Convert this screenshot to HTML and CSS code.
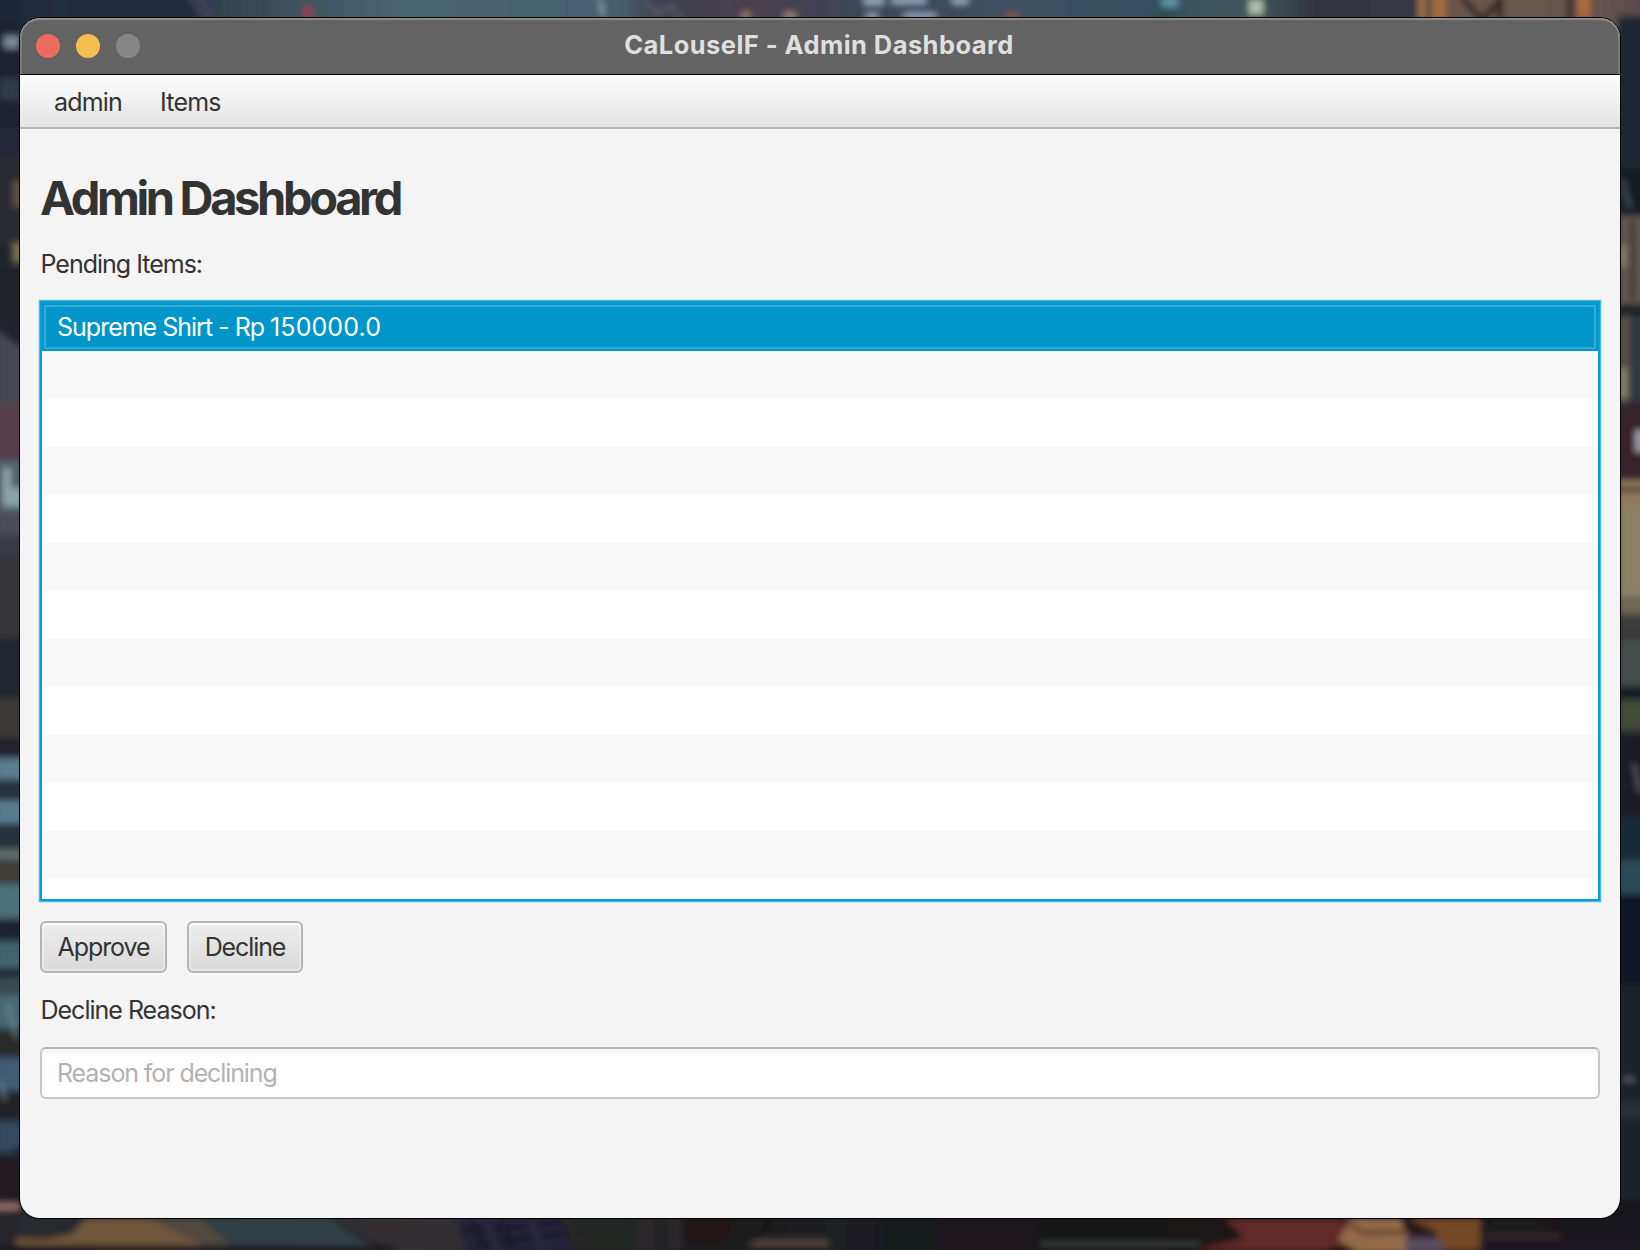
FILE: index.html
```html
<!DOCTYPE html>
<html lang="en">
<head>
<meta charset="utf-8">
<title>CaLouselF - Admin Dashboard</title>
<link rel="stylesheet" href="styles.css">
</head>
<body>
<svg class="wallpaper" width="1640" height="1250" viewBox="0 0 1640 1250" aria-hidden="true">
  <defs>
    <filter id="soft" x="-2%" y="-2%" width="104%" height="104%"><feGaussianBlur stdDeviation="3"/></filter>
    <linearGradient id="sky" x1="0" x2="1" y1="0" y2="0">
      <stop offset="0" stop-color="#1d2532"/><stop offset=".04" stop-color="#222d42"/>
      <stop offset=".12" stop-color="#22293c"/><stop offset=".14" stop-color="#34444f"/>
      <stop offset=".25" stop-color="#4a6674"/><stop offset=".38" stop-color="#456070"/>
      <stop offset=".4" stop-color="#3f424f"/><stop offset=".46" stop-color="#483f4c"/>
      <stop offset=".52" stop-color="#3d4556"/><stop offset=".62" stop-color="#3c5163"/>
      <stop offset=".7" stop-color="#355060"/><stop offset=".76" stop-color="#42575c"/>
      <stop offset=".8" stop-color="#32353e"/><stop offset=".86" stop-color="#353844"/>
      <stop offset=".88" stop-color="#6b5448"/><stop offset=".97" stop-color="#64544f"/>
      <stop offset="1" stop-color="#57494a"/>
    </linearGradient>
    <linearGradient id="street" x1="0" x2="1" y1="0" y2="0">
      <stop offset="0" stop-color="#25272b"/><stop offset=".24" stop-color="#2d3b40"/>
      <stop offset=".28" stop-color="#2d2b2c"/><stop offset=".45" stop-color="#1c1c1d"/>
      <stop offset=".51" stop-color="#1b2022"/><stop offset=".62" stop-color="#141618"/>
      <stop offset=".75" stop-color="#1c1718"/><stop offset=".92" stop-color="#1b1a1c"/>
      <stop offset="1" stop-color="#16181f"/>
    </linearGradient>
  </defs>
  <rect width="1640" height="1250" fill="#20242c"/>
  <g filter="url(#soft)">
    <rect x="-10" y="-10" width="1660" height="40" fill="url(#sky)"/>
    <path d="M185-5h20l16 30h-14z" fill="#3a4158"/>
    <path d="M304 6h7v14h-7z" fill="#a03048"/>
    <path d="M600 0l3 16" stroke="#b4c8ce" stroke-width="2"/>
    <path d="M645 0l12 14 14-8 10 14" stroke="#5d6273" stroke-width="3" fill="none"/>
    <path d="M742 12h8v8h-8zM784 12h12v8h-12z" fill="#9a7e70"/>
    <path d="M864-4h20v9h-20zM892-4h34v8h-34zM952-4h16v8h-16zM866 13h12v6h-12zM904 13h32v6h-32z" fill="#8fa3bd"/>
    <path d="M1006 13h12v8h-12z" fill="#8a4b44"/>
    <path d="M1162-3h16v10h-16z" fill="#5f93a8"/>
    <path d="M1150 10h26v12h-26z" fill="#2f4d55"/>
    <path d="M1249 0h14v14h-14z" fill="#b0bfa8"/>
    <path d="M1418-5h8v26h-8zM1432-5h14v26h-14z" fill="#a06e42"/>
    <path d="M1462-2l20 22 20-22M1500-5v26M1570-5v26" stroke="#2d2527" stroke-width="6" fill="none"/>
    <path d="M1578-5h12v22h-12z" fill="#b26a34"/>
    <rect x="-5" y="20" width="25" height="112" fill="#1c2431"/>
    <rect x="4" y="36" width="16" height="12" fill="#7b879b"/>
    <rect x="0" y="78" width="20" height="22" fill="#303a4c"/>
    <rect x="-5" y="128" width="30" height="26" fill="#202738"/>
    <rect x="-5" y="154" width="30" height="90" fill="#2b2c33"/>
    <rect x="13" y="181" width="12" height="26" fill="#5d5144"/>
    <rect x="12" y="243" width="12" height="20" fill="#7c6d4c"/>
    <rect x="-5" y="268" width="30" height="55" fill="#24242a"/>
    <path d="M-5 328l18 14 12 6v60h-30z" fill="#464652"/>
    <rect x="-5" y="404" width="30" height="58" fill="#563d49"/>
    <rect x="-5" y="460" width="30" height="52" fill="#53606a"/>
    <path d="M3 468h8v20h12v18h-20z" fill="#8aa5a8"/>
    <rect x="-5" y="512" width="30" height="25" fill="#4c4d59"/>
    <rect x="-5" y="535" width="30" height="22" fill="#393b45"/>
    <rect x="-5" y="556" width="30" height="82" fill="#363637"/>
    <rect x="-5" y="638" width="30" height="60" fill="#21282e"/>
    <rect x="-5" y="698" width="30" height="40" fill="#3b3838"/>
    <rect x="-5" y="738" width="30" height="18" fill="#20242a"/>
    <rect x="-5" y="758" width="30" height="22" fill="#587e90"/>
    <rect x="-5" y="782" width="30" height="16" fill="#26303a"/>
    <rect x="-5" y="800" width="30" height="24" fill="#577b8e"/>
    <rect x="-5" y="826" width="30" height="20" fill="#26303a"/>
    <rect x="-5" y="848" width="30" height="13" fill="#5b6a67"/>
    <rect x="-5" y="863" width="30" height="18" fill="#433c34"/>
    <rect x="-5" y="883" width="30" height="36" fill="#4c7078"/>
    <rect x="-5" y="921" width="30" height="18" fill="#1c222e"/>
    <rect x="-5" y="941" width="30" height="27" fill="#43636f"/>
    <rect x="-5" y="968" width="30" height="10" fill="#1e2833"/>
    <rect x="-5" y="977" width="30" height="18" fill="#3a4a50"/>
    <rect x="-5" y="995" width="30" height="34" fill="#466874"/>
    <rect x="-5" y="1031" width="30" height="24" fill="#2c2a2c"/>
    <rect x="-5" y="1057" width="30" height="34" fill="#405c74"/>
    <rect x="-5" y="1093" width="30" height="28" fill="#232425"/>
    <path d="M-5 1121h30v22l-14 10H-5z" fill="#31485f"/>
    <rect x="-5" y="1158" width="30" height="46" fill="#201e24"/>
    <path d="M8 1004l8 34M0 1082l5 18" stroke="#8ba5aa" stroke-width="1.5"/>
    <rect x="1618" y="16" width="30" height="152" fill="#1c2731"/>
    <rect x="1618" y="168" width="30" height="48" fill="#161d28"/>
    <path d="M1622 180l8 28" stroke="#5c6d78" stroke-width="2"/>
    <rect x="1618" y="216" width="30" height="88" fill="#625750"/>
    <rect x="1630" y="220" width="5" height="80" fill="#3c3637"/>
    <rect x="1618" y="245" width="9" height="22" fill="#837a67"/>
    <rect x="1618" y="304" width="30" height="12" fill="#1b2027"/>
    <rect x="1618" y="316" width="30" height="86" fill="#574f45"/>
    <rect x="1630" y="316" width="14" height="86" fill="#313844"/>
    <rect x="1618" y="368" width="9" height="30" fill="#84816b"/>
    <rect x="1618" y="402" width="30" height="77" fill="#35202a"/>
    <rect x="1635" y="430" width="10" height="22" fill="#9c99a1"/>
    <rect x="1618" y="480" width="30" height="28" fill="#927a60"/>
    <rect x="1618" y="487" width="30" height="5" fill="#4d3935"/>
    <rect x="1618" y="508" width="30" height="96" fill="#8b8068"/>
    <rect x="1618" y="596" width="30" height="18" fill="#6f6854"/>
    <rect x="1618" y="614" width="30" height="22" fill="#3d3d3a"/>
    <rect x="1618" y="638" width="30" height="48" fill="#444b4c"/>
    <rect x="1618" y="686" width="30" height="13" fill="#171c25"/>
    <rect x="1618" y="700" width="30" height="31" fill="#434b39"/>
    <rect x="1618" y="732" width="30" height="84" fill="#1c1f27"/>
    <path d="M1634 764l6 28" stroke="#6b737c" stroke-width="2"/>
    <rect x="1618" y="818" width="30" height="40" fill="#192a35"/>
    <rect x="1618" y="860" width="30" height="34" fill="#2c4b58"/>
    <rect x="1618" y="896" width="30" height="88" fill="#111821"/>
    <rect x="1618" y="984" width="30" height="220" fill="#1d202a"/>
    <rect x="1624" y="1078" width="10" height="3" fill="#6a6d77"/>
    <rect x="1618" y="1102" width="30" height="16" fill="#2a2d38"/>
    <rect x="-10" y="1200" width="1660" height="60" fill="url(#street)"/>
    <rect x="-5" y="1204" width="24" height="5" fill="#a97c75"/>
    <path d="M85 1219h98l10 12 18 8-2 6H16v-7l30 1 26-5z" fill="#6f543a"/>
    <path d="M150 1219h90l14 26h-50z" fill="#504a41"/>
    <path d="M200 1219h130l40 26H230z" fill="#304144"/>
    <path d="M0 1246h400v8H0z" fill="#1b191e"/>
    <path d="M335 1219h125l10 31h-75q-40-10-60-31z" fill="#332f33"/>
    <path d="M335 1219q20 21 60 31" stroke="#151416" stroke-width="2" fill="none"/>
    <path d="M455 1219h106l12 34h-104z" fill="#232138"/>
    <path d="M470 1219l18 31M500 1219l14 31M460 1232l104-10M474 1245l96-12" stroke="#171622" stroke-width="3"/>
    <path d="M484 1219l14 31M530 1219l12 31" stroke="#41405c" stroke-width="1.5"/>
    <path d="M570 1219h66v31h-50z" fill="#232523"/>
    <path d="M638 1219h16v31h-16zM668 1219h14v31h-14z" fill="#29272a"/>
    <path d="M684 1219h50l-8 22h-42z" fill="#221719"/>
    <path d="M770 1219q-10 22-30 32" stroke="#101010" stroke-width="3" fill="none"/>
    <path d="M758 1240h70v6h-82z" fill="#584a42"/>
    <path d="M935 1219h102v31h-98z" fill="#1b141d"/>
    <path d="M1040 1242h160v4h-160z" fill="#37413f"/>
    <path d="M1225 1219h130l10 18-40 13h-130l50-12z" fill="#612928"/>
    <path d="M1350 1219h50l10 20 26 2-26 12h-50l-22-12z" fill="#936b49"/>
    <path d="M1340 1219l24 14 80-2" stroke="#3d2424" stroke-width="3" fill="none"/>
    <path d="M1408 1219h72v31h-36l-10-20z" fill="#744828"/>
    <path d="M1404 1238h34l8 14h-40z" fill="#594e5f"/>
    <path d="M1482 1233h80v7h-80z" fill="#332621"/>
    <path d="M1482 1240h160v10h-160z" fill="#1b1920"/>
  </g>
</svg>

<main class="window">
  <header class="titlebar">
    <div class="lights">
      <span class="light light-close"></span>
      <span class="light light-minimize"></span>
      <span class="light light-zoom"></span>
    </div>
    <h1 class="window-title">CaLouselF - Admin Dashboard</h1>
  </header>
  <nav class="menubar">
    <span class="menu">admin</span>
    <span class="menu">Items</span>
  </nav>
  <section class="content">
    <h2 class="heading">Admin Dashboard</h2>
    <p class="label label-pending">Pending Items:</p>
    <ul class="list">
      <li class="row row-selected">Supreme Shirt - Rp <span class="price">150000.0</span></li>
      <li class="row"></li><li class="row"></li><li class="row"></li>
      <li class="row"></li><li class="row"></li><li class="row"></li>
      <li class="row"></li><li class="row"></li><li class="row"></li>
      <li class="row"></li><li class="row"></li><li class="row"></li>
    </ul>
    <div class="actions">
      <button class="button button-approve">Approve</button>
      <button class="button button-decline">Decline</button>
    </div>
    <p class="label">Decline Reason:</p>
    <div class="field">Reason for declining</div>
  </section>
</main>
</body>
</html>
```
FILE: styles.css
```css
* { box-sizing: border-box; }
body {
  margin: 0;
  width: 1640px;
  height: 1250px;
  overflow: hidden;
  position: relative;
  padding: 18px 20px 32px;
  font: 400 25px/34px Inter, "Liberation Sans", sans-serif;
  letter-spacing: -1px;
  color: #333;
}
h1, h2, p, ul { margin: 0; padding: 0; font-weight: inherit; font-size: inherit; }
.wallpaper { position: absolute; top: 0; left: 0; z-index: -1; }

.window {
  height: 1200px;
  display: flex;
  flex-direction: column;
  background: #f4f4f4;
  border-radius: 20px;
  box-shadow: 0 0 0 1px #000;
  overflow: hidden;
}
.titlebar {
  height: 57px;
  flex: none;
  display: grid;
  grid-template-columns: 1fr auto 1fr;
  align-items: center;
  padding: 0 16px;
  background: #636363;
  border-bottom: 1px solid #000;
  border-radius: 20px 20px 0 0;
  box-shadow: inset 0 2px 0 #8c8c8a, inset 2px 0 0 #7b7b7b, inset -2px 0 0 #7b7b7b;
}
.lights { display: flex; gap: 16px; }
.light { width: 24px; height: 24px; border-radius: 50%; }
.light-close { background: #ed6a5e; }
.light-minimize { background: #f5bf4f; }
.light-zoom { background: #868686; }
.window-title {
  padding: 0 2px 2px 0;
  font-size: 25.5px;
  font-weight: 700;
  letter-spacing: .44px;
  color: #dfdfdf;
  white-space: nowrap;
}

.menubar {
  height: 54px;
  flex: none;
  display: flex;
  align-items: center;
  gap: 38px;
  padding: 2px 0 0 34px;
  letter-spacing: -.8px;
  background: linear-gradient(#fdfdfd, #e4e4e4);
  border-bottom: 2px solid #b5b5b5;
}

.content {
  display: flex;
  flex-direction: column;
  gap: 20px;
  padding: 40px 20px 0;
}
.heading {
  height: 57px;
  font-size: 47px;
  line-height: 57px;
  font-weight: 700;
  letter-spacing: -3.35px;
}
.label { height: 34px; padding-left: .5px; }
.label-pending { height: 35px; line-height: 36px; }
.list {
  height: 600px;
  list-style: none;
  overflow: hidden;
  background: #fff;
  border: 2px solid #039ed3;
  box-shadow: 0 0 0 1px #4bb8dc, 0 0 0 2px #d3e8ef;
}
.row { height: 48px; line-height: 48px; }
.row:nth-child(even) { background: #f9f9f9; }
.row-selected {
  padding-left: 15px;
  background: #0096c9;
  color: #fff;
  outline: 2px solid #33abd4;
  outline-offset: -4px;
}
.price { letter-spacing: .1px; }
.actions { display: flex; gap: 20px; height: 52px; }
.button {
  font: inherit;
  letter-spacing: -1.1px;
  color: #333;
  padding: 0;
  border: 2px solid #b5b5b5;
  border-radius: 6px;
  background: linear-gradient(#eee, #d9d9d9);
  box-shadow: inset 0 2px 0 #fdfdfd, inset 0 0 0 2px rgba(255, 255, 255, .35), 0 2px 0 #fbfbfb;
}
.button-approve { width: 127px; }
.button-decline { width: 116px; }
.field {
  height: 52px;
  display: flex;
  align-items: center;
  padding-left: 15px;
  letter-spacing: -1.1px;
  border: 2px solid #c8c8c8;
  border-top-color: #b5b5b5;
  border-radius: 6px;
  background: linear-gradient(#f2f2f2, #fff 8px);
  color: #b2b2b2;
}
```
